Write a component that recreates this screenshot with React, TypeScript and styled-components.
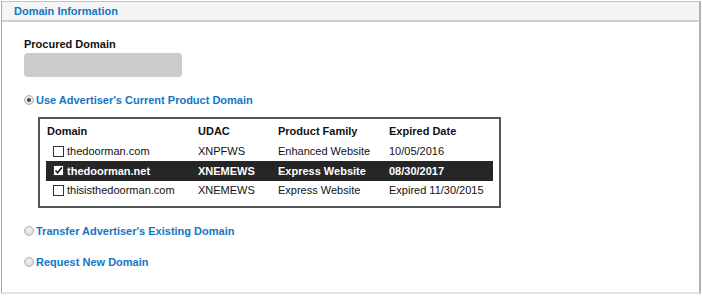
import React from "react";
import styled, { createGlobalStyle } from "styled-components";

const Global = createGlobalStyle`
  html, body { margin: 0; padding: 0; background: #fff; }
  body { font-family: "Liberation Sans", Arial, sans-serif; font-size: 11px; color: #111; }
`;

const Page = styled.div`
  width: 702px;
  height: 296px;
  box-sizing: border-box;
  padding: 1px 1px 0 1px;
  overflow: hidden;
  background: #fff;
`;

const Panel = styled.section`
  box-sizing: border-box;
  height: 293px;
  border-top: 1px solid #c4c4c4;
  border-left: 1px solid #a8a8a8;
  border-right: 2px solid #b0b0b0;
  border-bottom: 2px solid #e2e2e2;
  display: flex;
  flex-direction: column;
`;

const Header = styled.header`
  height: 18px;
  background: #f5f5f5;
  border-bottom: 2px solid #cfcfcf;
  display: flex;
  align-items: center;
  padding-left: 12px;
  color: #1176c7;
  font-weight: bold;
  font-size: 11px;
`;

const Body = styled.div`
  padding: 15px 0 0 22px;
  display: flex;
  flex-direction: column;
`;

const FieldLabel = styled.div`
  font-weight: bold;
  color: #111;
  height: 14px;
  line-height: 14px;
`;

const DisabledInput = styled.div`
  margin-top: 2px;
  width: 158px;
  height: 24px;
  border-radius: 4px;
  background: #cbcbcb;
`;

const RadioRow = styled.label<{ $top: number }>`
  display: flex;
  align-items: center;
  gap: 2px;
  margin-top: ${(p) => p.$top}px;
  color: #1176c7;
  font-weight: bold;
  height: 14px;
  cursor: pointer;
`;

const RadioDot = styled.span<{ $on?: boolean }>`
  box-sizing: border-box;
  width: 10px;
  height: 10px;
  border-radius: 50%;
  border: 1px solid #b3b3b3;
  background: radial-gradient(circle at 50% 40%, #f4f4f4 0%, #d3d3d3 100%);
  display: flex;
  align-items: center;
  justify-content: center;
  &::after {
    content: "";
    width: 4px;
    height: 4px;
    border-radius: 50%;
    background: ${(p) => (p.$on ? "#444" : "transparent")};
  }
`;

const TableBox = styled.div`
  margin: 10px 0 0 14px;
  width: 463px;
  box-sizing: border-box;
  border: 2px solid #555;
  padding: 2px 6px 6px 6px;
`;

const Row = styled.div<{ $head?: boolean; $selected?: boolean }>`
  display: grid;
  grid-template-columns: 150px 80px 111px 1fr;
  height: ${(p) => (p.$head ? 20.5 : 19.5)}px;
  align-items: center;
  font-weight: ${(p) => (p.$head || p.$selected ? "bold" : "normal")};
  background: ${(p) => (p.$selected ? "#262626" : "transparent")};
  color: ${(p) => (p.$selected ? "#fff" : "#111")};
`;

const Cell = styled.div<{ $first?: boolean }>`
  padding-left: ${(p) => (p.$first ? 1 : 2)}px;
  display: flex;
  align-items: center;
  gap: 3px;
  white-space: nowrap;
`;

const DomainCell = styled(Cell)`
  padding-left: 7px;
`;

const Check = styled.span`
  box-sizing: border-box;
  width: 11px;
  height: 11px;
  border: 1px solid #333;
  background: #fff;
  display: inline-flex;
  align-items: center;
  justify-content: center;
`;

type Item = { domain: string; udac: string; family: string; date: string; selected?: boolean };

const items: Item[] = [
  { domain: "thedoorman.com", udac: "XNPFWS", family: "Enhanced Website", date: "10/05/2016" },
  { domain: "thedoorman.net", udac: "XNEMEWS", family: "Express Website", date: "08/30/2017", selected: true },
  { domain: "thisisthedoorman.com", udac: "XNEMEWS", family: "Express Website", date: "Expired 11/30/2015" },
];

export default function App() {
  return (
    <>
      <Global />
      <Page>
        <Panel>
          <Header>Domain Information</Header>
          <Body>
            <FieldLabel>Procured Domain</FieldLabel>
            <DisabledInput />
            <RadioRow $top={16}>
              <RadioDot $on />
              Use Advertiser's Current Product Domain
            </RadioRow>
            <TableBox>
              <Row $head>
                <Cell $first>Domain</Cell>
                <Cell>UDAC</Cell>
                <Cell>Product Family</Cell>
                <Cell>Expired Date</Cell>
              </Row>
              {items.map((it) => (
                <Row key={it.domain} $selected={it.selected}>
                  <DomainCell>
                    <Check>
                      {it.selected && (
                        <svg width="9" height="9" viewBox="0 0 9 9">
                          <path d="M1.5 4.5 L3.6 6.8 L7.8 1.6" fill="none" stroke="#111" strokeWidth="1.6" />
                        </svg>
                      )}
                    </Check>
                    {it.domain}
                  </DomainCell>
                  <Cell>{it.udac}</Cell>
                  <Cell>{it.family}</Cell>
                  <Cell>{it.date}</Cell>
                </Row>
              ))}
            </TableBox>
            <RadioRow $top={16}>
              <RadioDot />
              Transfer Advertiser's Existing Domain
            </RadioRow>
            <RadioRow $top={17}>
              <RadioDot />
              Request New Domain
            </RadioRow>
          </Body>
        </Panel>
      </Page>
    </>
  );
}
